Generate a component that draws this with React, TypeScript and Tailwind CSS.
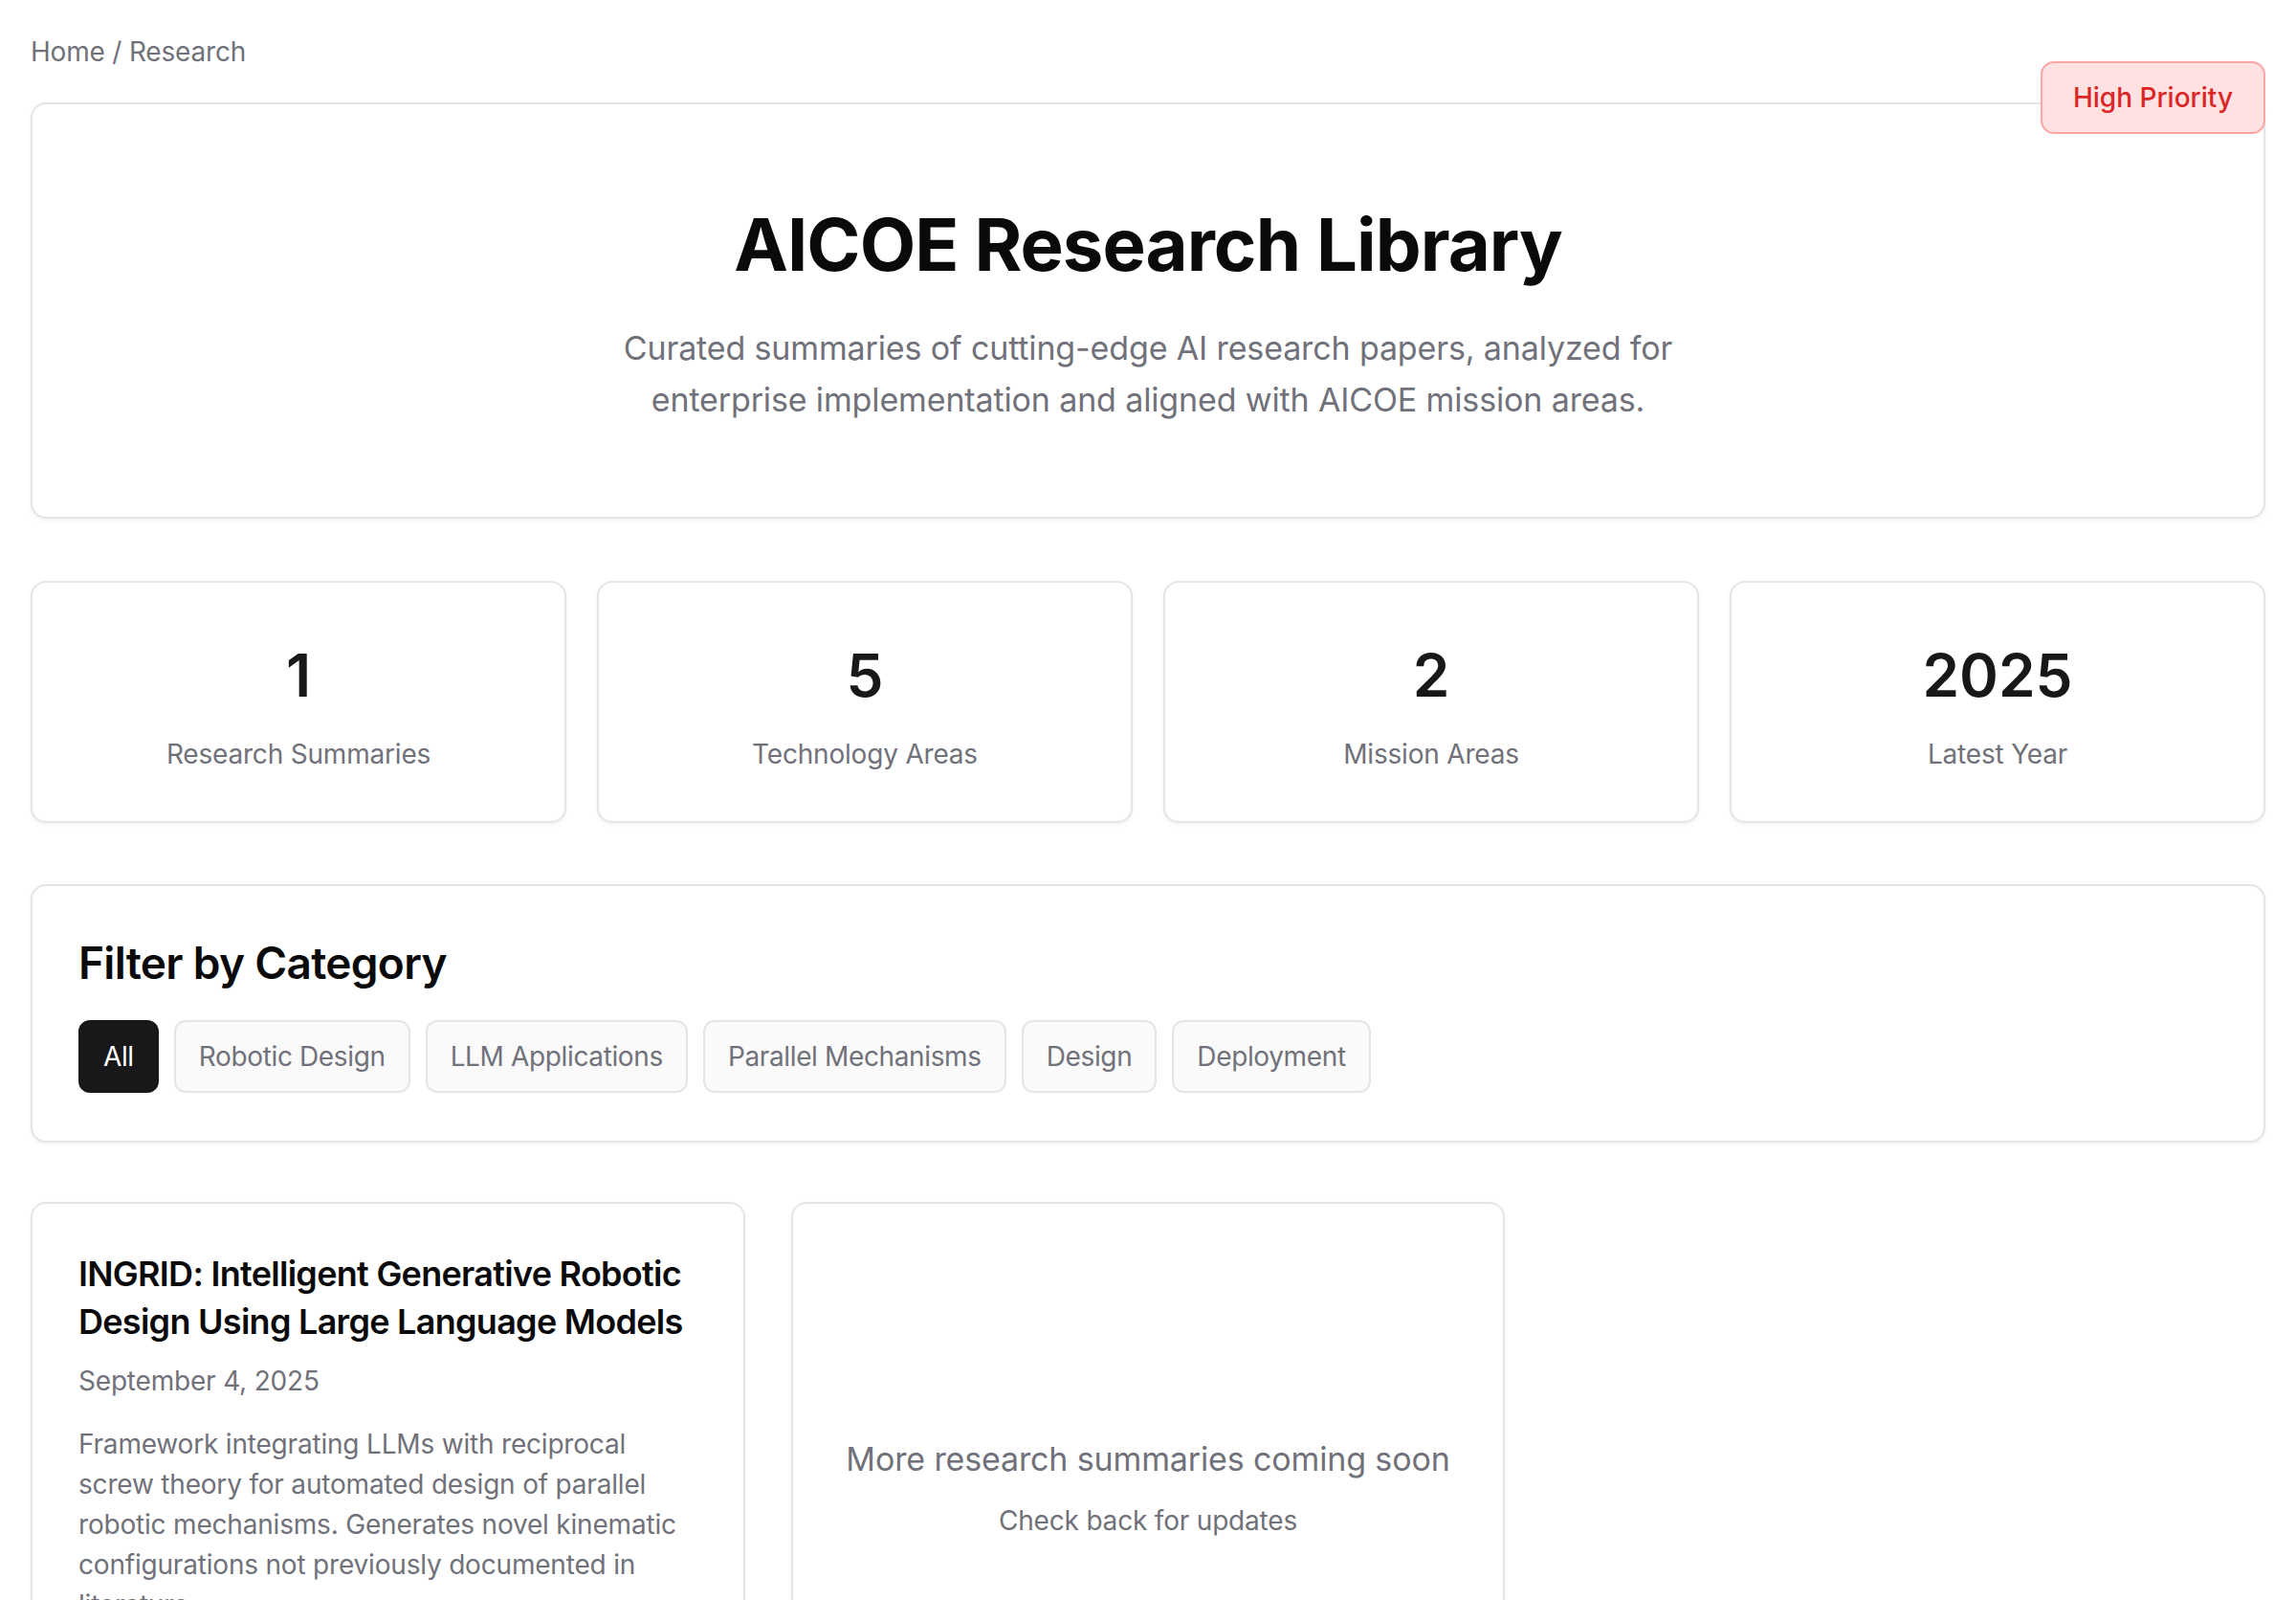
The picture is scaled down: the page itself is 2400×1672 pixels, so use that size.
const stats = [
  { value: '1', label: 'Research Summaries' },
  { value: '5', label: 'Technology Areas' },
  { value: '2', label: 'Mission Areas' },
  { value: '2025', label: 'Latest Year' },
]

const categories = ['All', 'Robotic Design', 'LLM Applications', 'Parallel Mechanisms', 'Design', 'Deployment']

const card = 'bg-white rounded-[16px] border-2 border-[#e5e5e5] shadow-[0_2px_4px_rgba(0,0,0,0.05)]'

export default function App() {
  return (
    <div className="relative min-h-screen bg-white px-[32px] pt-[34px] pb-[64px] font-['Inter','Liberation_Sans',sans-serif] tracking-[-0.012em] antialiased">
      <span className="absolute top-[64px] right-[32px] rounded-[14px] border-2 border-[#fca5a5] bg-[#fee2e2] px-[32px] py-[16px] text-[28px] leading-[40px] font-medium tracking-normal text-[#dc2626]">
        High Priority
      </span>

      <nav className="mb-[33px] text-[28px] leading-[40px] text-[#71717a]">
        <span>Home</span> / <span>Research</span>
      </nav>

      <section className={`${card} pt-[106px] pb-[95px] text-center`}>
        <h1 className="mb-[42px] text-[76px] leading-[80px] font-bold tracking-[-0.0125em] text-[#0a0a0a]">
          AICOE Research Library
        </h1>
        <p className="mx-auto max-w-[1152px] text-[34px] leading-[54px] tracking-[-0.004em] text-[#71717a]">
          Curated summaries of cutting-edge AI research papers, analyzed for enterprise implementation and aligned with
          AICOE mission areas.
        </p>
      </section>

      <div className="mt-[65px] grid grid-cols-4 gap-[32px]">
        {stats.map((s) => (
          <div key={s.label} className={`${card} pt-[61px] pb-[50px] text-center`}>
            <div className="mb-[26px] text-[62px] leading-[72px] font-semibold tracking-normal text-[#18181b]">{s.value}</div>
            <div className="text-[28px] leading-[40px] text-[#71717a]">{s.label}</div>
          </div>
        ))}
      </div>

      <section className={`${card} mt-[64px] px-[48px] pt-[48px] pb-[50px]`}>
        <h2 className="mb-[28px] text-[46px] leading-[64px] font-semibold tracking-[-0.015em] text-[#0a0a0a]">
          Filter by Category
        </h2>
        <div className="flex flex-wrap gap-[16px]">
          {categories.map((c, i) => (
            <button
              key={c}
              className={
                i === 0
                  ? 'rounded-[12px] border-2 border-[#18181b] bg-[#18181b] px-[24px] py-[16px] text-[28px] leading-[40px] tracking-[-0.013em] text-white'
                  : 'rounded-[12px] border-2 border-[#e5e5e5] bg-[#fafafa] px-[24px] py-[16px] text-[28px] leading-[40px] tracking-[-0.013em] text-[#71717a]'
              }
            >
              {c}
            </button>
          ))}
        </div>
      </section>

      <div className="mt-[62px] grid grid-cols-3 items-start gap-[48px]">
        <article className={`${card} p-[48px]`}>
          <h3 className="mb-[17px] text-[36px] leading-[50px] font-semibold tracking-[-0.02em] text-[#0a0a0a]">
            INGRID: Intelligent Generative Robotic Design Using Large Language Models
          </h3>
          <div className="mb-[25px] text-[28px] leading-[40px] text-[#71717a]">September 4, 2025</div>
          <p className="text-[28px] leading-[42px] text-[#71717a]">
            Framework integrating LLMs with reciprocal screw theory for automated design of parallel robotic mechanisms.
            Generates novel kinematic configurations not previously documented in literature.
          </p>
          <div className="mt-[32px] flex flex-wrap gap-[12px]">
            {['Robotic Design', 'LLM Applications', 'Parallel Mechanisms'].map((t) => (
              <span key={t} className="rounded-full bg-[#f4f4f5] px-[20px] py-[6px] text-[24px] leading-[32px] text-[#3f3f46]">
                {t}
              </span>
            ))}
          </div>
        </article>

        <article className={`${card} pt-[239px] pb-[238px] text-center`}>
          <p className="mb-[16px] text-[34px] leading-[56px] tracking-[-0.004em] text-[#71717a]">
            More research summaries coming soon
          </p>
          <p className="text-[28px] leading-[40px] text-[#71717a]">Check back for updates</p>
        </article>
      </div>
    </div>
  )
}
